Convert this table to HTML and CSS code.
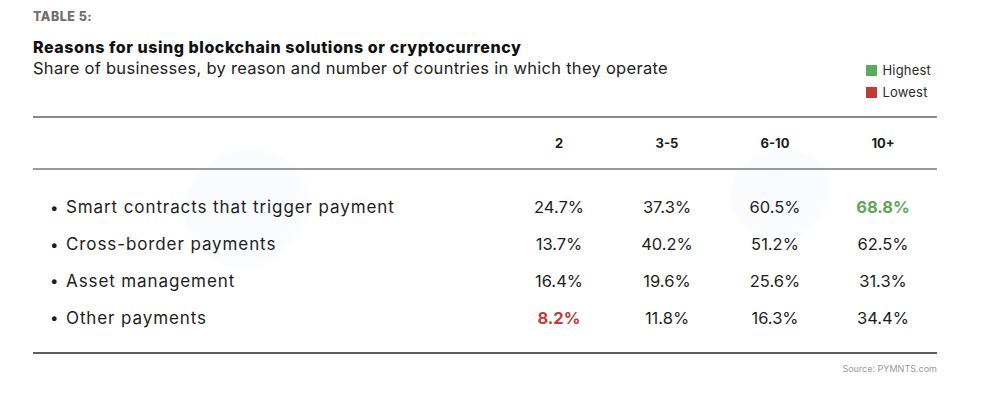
FILE: index.html
```html
<!DOCTYPE html>
<html lang="en">
<head>
<meta charset="utf-8">
<title>Table 5</title>
<link rel="stylesheet" href="styles.css">
</head>
<body>
<div class="page">
  <div class="wm wm-left"></div>
  <div class="wm wm-right"></div>
  <div class="eyebrow">TABLE 5:</div>
  <div class="head">
    <div class="titles">
      <h1 class="title">Reasons for using blockchain solutions or cryptocurrency</h1>
      <p class="subtitle">Share of businesses, by reason and number of countries in which they operate</p>
    </div>
    <ul class="legend">
      <li><span class="sw sw-high"></span>Highest</li>
      <li><span class="sw sw-low"></span>Lowest</li>
    </ul>
  </div>
  <div class="table">
    <div class="row row-head">
      <div class="label"></div>
      <div class="cell">2</div>
      <div class="cell">3-5</div>
      <div class="cell">6-10</div>
      <div class="cell">10+</div>
    </div>
    <div class="body">
      <div class="row">
        <div class="label"><span class="dot">•</span>Smart contracts that trigger payment</div>
        <div class="cell">24.7%</div>
        <div class="cell">37.3%</div>
        <div class="cell">60.5%</div>
        <div class="cell high">68.8%</div>
      </div>
      <div class="row">
        <div class="label"><span class="dot">•</span>Cross-border payments</div>
        <div class="cell">13.7%</div>
        <div class="cell">40.2%</div>
        <div class="cell">51.2%</div>
        <div class="cell">62.5%</div>
      </div>
      <div class="row">
        <div class="label"><span class="dot">•</span>Asset management</div>
        <div class="cell">16.4%</div>
        <div class="cell">19.6%</div>
        <div class="cell">25.6%</div>
        <div class="cell">31.3%</div>
      </div>
      <div class="row">
        <div class="label"><span class="dot">•</span>Other payments</div>
        <div class="cell low">8.2%</div>
        <div class="cell">11.8%</div>
        <div class="cell">16.3%</div>
        <div class="cell">34.4%</div>
      </div>
    </div>
  </div>
  <div class="source">Source: PYMNTS.com</div>
</div>
</body>
</html>
```
FILE: styles.css
```css
* { box-sizing: border-box; }
html, body { margin: 0; padding: 0; background: #fff; }
body {
  font-family: "Inter", "Open Sans", "Liberation Sans", sans-serif;
  color: #1d1d1d;
  width: 988px;
  height: 400px;
  overflow: hidden;
}
.page {
  position: relative;
  width: 988px;
  padding: 9px 51px 0 33px;
}
.wm {
  position: absolute;
  border-radius: 50%;
  background: radial-gradient(circle at 40% 40%, #f9fafd 0%, #fbfcfe 60%, rgba(255,255,255,0) 72%);
  z-index: 0;
}
.wm-left { left: 185px; top: 150px; width: 130px; height: 120px; }
.wm-right { left: 730px; top: 150px; width: 110px; height: 90px; }
.eyebrow, .head, .table, .source { position: relative; z-index: 1; }
.eyebrow {
  font-size: 12.5px;
  font-weight: 800;
  color: #6f6f6f;
  line-height: 16px;
  letter-spacing: 0.5px;
}
.head {
  display: flex;
  justify-content: space-between;
  align-items: flex-start;
  margin-top: 12px;
  height: 79px;
}
.title {
  margin: 0;
  font-size: 16px;
  font-weight: 800;
  line-height: 20px;
  color: #111;
  letter-spacing: 0.55px;
}
.subtitle {
  margin: 1px 0 0;
  font-size: 16.5px;
  line-height: 20px;
  color: #222;
  letter-spacing: 0.28px;
}
.legend {
  list-style: none;
  margin: 25px 6px 0 0;
  padding: 0;
  display: flex;
  flex-direction: column;
  gap: 6px;
}
.legend li {
  display: flex;
  align-items: center;
  gap: 5px;
  font-size: 13px;
  line-height: 16px;
  color: #2a2a2a;
  letter-spacing: 0.2px;
}
.sw { width: 11px; height: 11px; display: inline-block; }
.sw-high { background: #5aab5a; }
.sw-low { background: #c23a36; }
.table {
  width: 904px;
  border-top: 2px solid #8a8a8a;
  border-bottom: 2px solid #5f5f5f;
}
.row {
  display: grid;
  grid-template-columns: 472px repeat(4, 108px);
  align-items: center;
}
.row-head {
  height: 52px;
  border-bottom: 2px solid #9a9a9a;
  font-size: 13px;
  font-weight: 700;
  color: #1a1a1a;
}
.body { padding: 19px 0 16px; }
.body .row { height: 36.8px; font-size: 16.5px; }
.label {
  display: flex;
  align-items: center;
  padding-left: 17px;
  color: #1d1d1d;
  font-size: 17px;
  letter-spacing: 0.9px;
}
.dot { width: 16px; font-size: 15px; }
.cell { text-align: center; color: #1d1d1d; }
.cell.high { color: #5fa75a; font-weight: 700; }
.cell.low { color: #c03d38; font-weight: 700; }
.source {
  width: 904px;
  text-align: right;
  font-size: 9px;
  color: #9a9a9a;
  margin-top: 9px;
}
```
